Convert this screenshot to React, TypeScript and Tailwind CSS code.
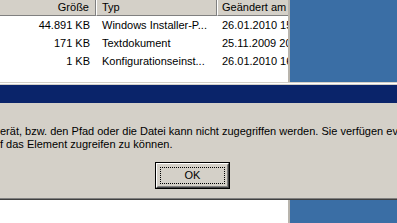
const font = { fontFamily: '"Liberation Sans", Arial, sans-serif' };

type Row = { size: string; type: string; date: string };

const rows: Row[] = [
  { size: "44.891 KB", type: "Windows Installer-P...", date: "26.01.2010 15:12" },
  { size: "171 KB", type: "Textdokument", date: "25.11.2009 20:41" },
  { size: "1 KB", type: "Konfigurationseinst...", date: "26.01.2010 16:03" },
];

function Desktop({ height }: { height: string }) {
  return <div className={`flex-1 bg-[#3a6ea5] ${height}`} />;
}

function FileList() {
  return (
    <div className="flex h-[82px]">
      <div className="w-[290px] bg-white overflow-hidden border-r-2 border-[#b8b4ac] shrink-0">
        <div className="flex h-[16px] bg-[#d4d0c8] text-[11px] text-black leading-[15px]">
          <div className="w-[96px] shrink-0 border-r border-b border-[#808080] pr-[6px] text-right">
            Größe
          </div>
          <div className="w-[121px] shrink-0 border-l border-white border-r border-b border-r-[#808080] border-b-[#808080] pl-[5px]">
            Typ
          </div>
          <div className="flex-1 border-l border-white border-b border-b-[#808080] pl-[4px] whitespace-nowrap">
            Geändert am
          </div>
        </div>
        {rows.map((r) => (
          <div key={r.size} className="flex h-[18px] items-center text-[11px] text-black whitespace-nowrap">
            <div className="w-[96px] shrink-0 pr-[6px] text-right">{r.size}</div>
            <div className="w-[121px] shrink-0 pl-[6px] overflow-hidden">{r.type}</div>
            <div className="flex-1 pl-[5px] overflow-hidden">{r.date}</div>
          </div>
        ))}
      </div>
      <Desktop height="h-[82px]" />
    </div>
  );
}

function Dialog() {
  return (
    <div className="h-[118px] bg-[#d4d0c8] flex flex-col border-t border-[#d4d0c8]">
      <div className="h-px bg-white" />
      <div className="h-[18px] bg-[#0a246a] mt-px" />
      <div className="flex-1 flex flex-col overflow-hidden">
        <div className="mt-[22px] text-[11px] leading-[13px] text-black whitespace-nowrap overflow-hidden">
          <p>erät, bzw. den Pfad oder die Datei kann nicht zugegriffen werden. Sie verfügen eventuell nicht über</p>
          <p>f das Element zugreifen zu können.</p>
        </div>
        <div className="mt-[11px] ml-[155px]">
          <button className="w-[75px] h-[27px] border border-black bg-[#d4d0c8] p-0 block">
            <div className="h-full border border-t-white border-l-white border-r-[#404040] border-b-[#404040]">
              <div className="h-full border border-t-[#d4d0c8] border-l-[#d4d0c8] border-r-[#808080] border-b-[#808080] p-[2px]">
                <div className="h-full border border-dotted border-black flex items-center justify-center text-[11px] text-black">
                  OK
                </div>
              </div>
            </div>
          </button>
        </div>
      </div>
      <div className="h-px bg-[#808080]" />
      <div className="h-px bg-[#404040]" />
    </div>
  );
}

export default function App() {
  return (
    <div className="w-[397px] h-[223px] overflow-hidden bg-white" style={font}>
      <FileList />
      <Dialog />
      <div className="flex h-[23px]">
        <div className="w-[290px] bg-white border-r-2 border-[#b8b4ac] shrink-0" />
        <Desktop height="h-[23px]" />
      </div>
    </div>
  );
}
